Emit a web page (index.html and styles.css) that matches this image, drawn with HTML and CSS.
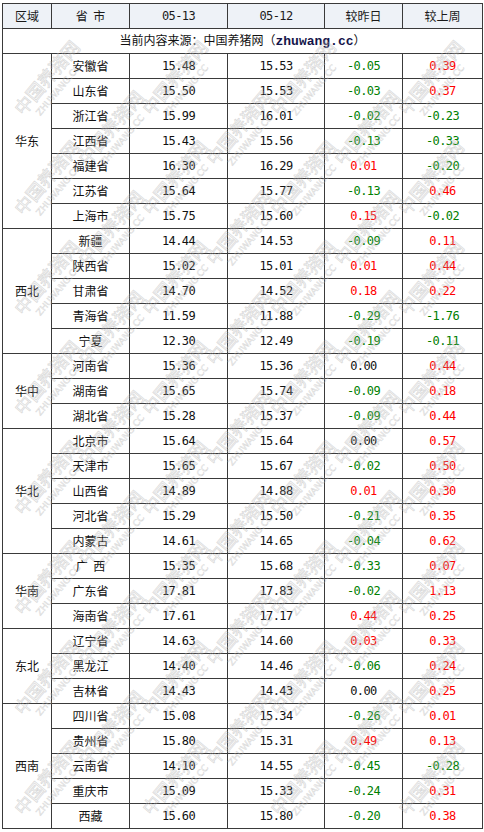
FILE: index.html
```html
<!DOCTYPE html>
<html lang="zh">
<head>
<meta charset="utf-8">
<title>生猪价格</title>
<link rel="stylesheet" href="styles.css">
</head>
<body>
<div class="sheet">
<table class="price">
<colgroup><col class="c1"><col class="c2"><col class="c3"><col class="c4"><col class="c5"><col class="c6"></colgroup>
<thead>
<tr class="head"><th>区域</th><th>省&nbsp;&nbsp;市</th><th class="num">05-13</th><th class="num">05-12</th><th>较昨日</th><th>较上周</th></tr>
</thead>
<tbody>
<tr><td colspan="6" class="src">当前内容来源：中国养猪网（<b class="site">zhuwang.cc</b>）</td></tr>
<tr><td rowspan="7">华东</td><td>安徽省</td><td class="num">15.48</td><td class="num">15.53</td><td class="num dn">-0.05</td><td class="num up">0.39</td></tr>
<tr><td>山东省</td><td class="num">15.50</td><td class="num">15.53</td><td class="num dn">-0.03</td><td class="num up">0.37</td></tr>
<tr><td>浙江省</td><td class="num">15.99</td><td class="num">16.01</td><td class="num dn">-0.02</td><td class="num dn">-0.23</td></tr>
<tr><td>江西省</td><td class="num">15.43</td><td class="num">15.56</td><td class="num dn">-0.13</td><td class="num dn">-0.33</td></tr>
<tr><td>福建省</td><td class="num">16.30</td><td class="num">16.29</td><td class="num up">0.01</td><td class="num dn">-0.20</td></tr>
<tr><td>江苏省</td><td class="num">15.64</td><td class="num">15.77</td><td class="num dn">-0.13</td><td class="num up">0.46</td></tr>
<tr><td>上海市</td><td class="num">15.75</td><td class="num">15.60</td><td class="num up">0.15</td><td class="num dn">-0.02</td></tr>
<tr><td rowspan="5">西北</td><td>新疆</td><td class="num">14.44</td><td class="num">14.53</td><td class="num dn">-0.09</td><td class="num up">0.11</td></tr>
<tr><td>陕西省</td><td class="num">15.02</td><td class="num">15.01</td><td class="num up">0.01</td><td class="num up">0.44</td></tr>
<tr><td>甘肃省</td><td class="num">14.70</td><td class="num">14.52</td><td class="num up">0.18</td><td class="num up">0.22</td></tr>
<tr><td>青海省</td><td class="num">11.59</td><td class="num">11.88</td><td class="num dn">-0.29</td><td class="num dn">-1.76</td></tr>
<tr><td>宁夏</td><td class="num">12.30</td><td class="num">12.49</td><td class="num dn">-0.19</td><td class="num dn">-0.11</td></tr>
<tr><td rowspan="3">华中</td><td>河南省</td><td class="num">15.36</td><td class="num">15.36</td><td class="num">0.00</td><td class="num up">0.44</td></tr>
<tr><td>湖南省</td><td class="num">15.65</td><td class="num">15.74</td><td class="num dn">-0.09</td><td class="num up">0.18</td></tr>
<tr><td>湖北省</td><td class="num">15.28</td><td class="num">15.37</td><td class="num dn">-0.09</td><td class="num up">0.44</td></tr>
<tr><td rowspan="5">华北</td><td>北京市</td><td class="num">15.64</td><td class="num">15.64</td><td class="num">0.00</td><td class="num up">0.57</td></tr>
<tr><td>天津市</td><td class="num">15.65</td><td class="num">15.67</td><td class="num dn">-0.02</td><td class="num up">0.50</td></tr>
<tr><td>山西省</td><td class="num">14.89</td><td class="num">14.88</td><td class="num up">0.01</td><td class="num up">0.30</td></tr>
<tr><td>河北省</td><td class="num">15.29</td><td class="num">15.50</td><td class="num dn">-0.21</td><td class="num up">0.35</td></tr>
<tr><td>内蒙古</td><td class="num">14.61</td><td class="num">14.65</td><td class="num dn">-0.04</td><td class="num up">0.62</td></tr>
<tr><td rowspan="3">华南</td><td>广&nbsp;&nbsp;西</td><td class="num">15.35</td><td class="num">15.68</td><td class="num dn">-0.33</td><td class="num up">0.07</td></tr>
<tr><td>广东省</td><td class="num">17.81</td><td class="num">17.83</td><td class="num dn">-0.02</td><td class="num up">1.13</td></tr>
<tr><td>海南省</td><td class="num">17.61</td><td class="num">17.17</td><td class="num up">0.44</td><td class="num up">0.25</td></tr>
<tr><td rowspan="3">东北</td><td>辽宁省</td><td class="num">14.63</td><td class="num">14.60</td><td class="num up">0.03</td><td class="num up">0.33</td></tr>
<tr><td>黑龙江</td><td class="num">14.40</td><td class="num">14.46</td><td class="num dn">-0.06</td><td class="num up">0.24</td></tr>
<tr><td>吉林省</td><td class="num">14.43</td><td class="num">14.43</td><td class="num">0.00</td><td class="num up">0.25</td></tr>
<tr><td rowspan="5">西南</td><td>四川省</td><td class="num">15.08</td><td class="num">15.34</td><td class="num dn">-0.26</td><td class="num up">0.01</td></tr>
<tr><td>贵州省</td><td class="num">15.80</td><td class="num">15.31</td><td class="num up">0.49</td><td class="num up">0.13</td></tr>
<tr><td>云南省</td><td class="num">14.10</td><td class="num">14.55</td><td class="num dn">-0.45</td><td class="num dn">-0.28</td></tr>
<tr><td>重庆市</td><td class="num">15.09</td><td class="num">15.33</td><td class="num dn">-0.24</td><td class="num up">0.31</td></tr>
<tr><td>西藏</td><td class="num">15.60</td><td class="num">15.80</td><td class="num dn">-0.20</td><td class="num up">0.38</td></tr>
</tbody>
</table>
<div class="marks" aria-hidden="true">
<div class="col"><span class="wm"><i>中国养猪网</i><s>ZHUWANG.CC</s></span><span class="wm"><i>中国养猪网</i><s>ZHUWANG.CC</s></span><span class="wm"><i>中国养猪网</i><s>ZHUWANG.CC</s></span><span class="wm"><i>中国养猪网</i><s>ZHUWANG.CC</s></span><span class="wm"><i>中国养猪网</i><s>ZHUWANG.CC</s></span><span class="wm"><i>中国养猪网</i><s>ZHUWANG.CC</s></span><span class="wm"><i>中国养猪网</i><s>ZHUWANG.CC</s></span><span class="wm"><i>中国养猪网</i><s>ZHUWANG.CC</s></span></div>
<div class="col odd"><span class="wm"><i>中国养猪网</i><s>ZHUWANG.CC</s></span><span class="wm"><i>中国养猪网</i><s>ZHUWANG.CC</s></span><span class="wm"><i>中国养猪网</i><s>ZHUWANG.CC</s></span><span class="wm"><i>中国养猪网</i><s>ZHUWANG.CC</s></span><span class="wm"><i>中国养猪网</i><s>ZHUWANG.CC</s></span><span class="wm"><i>中国养猪网</i><s>ZHUWANG.CC</s></span><span class="wm"><i>中国养猪网</i><s>ZHUWANG.CC</s></span></div>
<div class="col"><span class="wm"><i>中国养猪网</i><s>ZHUWANG.CC</s></span><span class="wm"><i>中国养猪网</i><s>ZHUWANG.CC</s></span><span class="wm"><i>中国养猪网</i><s>ZHUWANG.CC</s></span><span class="wm"><i>中国养猪网</i><s>ZHUWANG.CC</s></span><span class="wm"><i>中国养猪网</i><s>ZHUWANG.CC</s></span><span class="wm"><i>中国养猪网</i><s>ZHUWANG.CC</s></span><span class="wm"><i>中国养猪网</i><s>ZHUWANG.CC</s></span><span class="wm"><i>中国养猪网</i><s>ZHUWANG.CC</s></span></div>
<div class="col odd"><span class="wm"><i>中国养猪网</i><s>ZHUWANG.CC</s></span><span class="wm"><i>中国养猪网</i><s>ZHUWANG.CC</s></span><span class="wm"><i>中国养猪网</i><s>ZHUWANG.CC</s></span><span class="wm"><i>中国养猪网</i><s>ZHUWANG.CC</s></span><span class="wm"><i>中国养猪网</i><s>ZHUWANG.CC</s></span><span class="wm"><i>中国养猪网</i><s>ZHUWANG.CC</s></span><span class="wm"><i>中国养猪网</i><s>ZHUWANG.CC</s></span></div>
<div class="col"><span class="wm"><i>中国养猪网</i><s>ZHUWANG.CC</s></span><span class="wm"><i>中国养猪网</i><s>ZHUWANG.CC</s></span><span class="wm"><i>中国养猪网</i><s>ZHUWANG.CC</s></span><span class="wm"><i>中国养猪网</i><s>ZHUWANG.CC</s></span><span class="wm"><i>中国养猪网</i><s>ZHUWANG.CC</s></span><span class="wm"><i>中国养猪网</i><s>ZHUWANG.CC</s></span><span class="wm"><i>中国养猪网</i><s>ZHUWANG.CC</s></span><span class="wm"><i>中国养猪网</i><s>ZHUWANG.CC</s></span></div>
<div class="col odd"><span class="wm"><i>中国养猪网</i><s>ZHUWANG.CC</s></span><span class="wm"><i>中国养猪网</i><s>ZHUWANG.CC</s></span><span class="wm"><i>中国养猪网</i><s>ZHUWANG.CC</s></span><span class="wm"><i>中国养猪网</i><s>ZHUWANG.CC</s></span><span class="wm"><i>中国养猪网</i><s>ZHUWANG.CC</s></span><span class="wm"><i>中国养猪网</i><s>ZHUWANG.CC</s></span><span class="wm"><i>中国养猪网</i><s>ZHUWANG.CC</s></span></div>
<div class="col"><span class="wm"><i>中国养猪网</i><s>ZHUWANG.CC</s></span><span class="wm"><i>中国养猪网</i><s>ZHUWANG.CC</s></span><span class="wm"><i>中国养猪网</i><s>ZHUWANG.CC</s></span><span class="wm"><i>中国养猪网</i><s>ZHUWANG.CC</s></span><span class="wm"><i>中国养猪网</i><s>ZHUWANG.CC</s></span><span class="wm"><i>中国养猪网</i><s>ZHUWANG.CC</s></span><span class="wm"><i>中国养猪网</i><s>ZHUWANG.CC</s></span><span class="wm"><i>中国养猪网</i><s>ZHUWANG.CC</s></span></div>
</div>
</div>
</body>
</html>
```
FILE: styles.css
```css
html, body {
  margin: 0;
  padding: 0;
  background: #ffffff;
}
body {
  font-family: "Noto Sans CJK SC", "DejaVu Sans", sans-serif;
  font-size: 12px;
  color: #111111;
}
.sheet {
  position: relative;
  width: 480px;
  margin: 3px 0 0 2px;
}
.price {
  border-collapse: collapse;
  table-layout: fixed;
  width: 480px;
}
.c1 { width: 49px; }
.c2 { width: 78px; }
.c3 { width: 98px; }
.c4 { width: 97px; }
.c5 { width: 78px; }
.c6 { width: 80px; }
.price th,
.price td {
  border: 1px solid #3a3a3a;
  height: 24px;
  padding: 0;
  text-align: center;
  vertical-align: middle;
  line-height: 16px;
  font-weight: normal;
  white-space: nowrap;
}
.price tr { height: 25px; }
.head th {
  background: #eef2f7;
  color: #1a1a1a;
}
.num {
  font-family: "DejaVu Sans Mono", "Liberation Mono", monospace;
  font-size: 12px;
  letter-spacing: -0.6px;
}
.up { color: #ff0000; }
.dn { color: #008000; }
.site {
  font-family: "Liberation Mono", "DejaVu Sans Mono", monospace;
  font-weight: bold;
  font-size: 13px;
  color: #14144a;
}
.marks {
  position: absolute;
  left: 12px;
  top: 24px;
  display: flex;
  pointer-events: none;
}
.col {
  display: flex;
  flex-direction: column;
  align-items: center;
  width: 64px;
}
.col.odd {
  padding-top: 50px;
}
.wm {
  position: relative;
  display: block;
  width: 62px;
  height: 100px;
}
.wm i,
.wm s {
  position: absolute;
  left: 50%;
  top: 50%;
  white-space: nowrap;
}
.wm i {
  font-style: normal;
  font-family: "Noto Sans CJK SC", sans-serif;
  font-weight: normal;
  font-size: 18px;
  line-height: 18px;
  color: rgba(255,255,255,0);
  -webkit-text-stroke: 0.7px rgba(175,175,175,0.5);
  transform: translate(-50%, -50%) rotate(-50deg);
}
.wm s {
  text-decoration: none;
  font-family: "DejaVu Sans", sans-serif;
  font-size: 9px;
  line-height: 9px;
  color: rgba(255,255,255,0);
  -webkit-text-stroke: 0.5px rgba(175,175,175,0.5);
  transform: translate(-30%, 100%) rotate(-50deg);
}
```
